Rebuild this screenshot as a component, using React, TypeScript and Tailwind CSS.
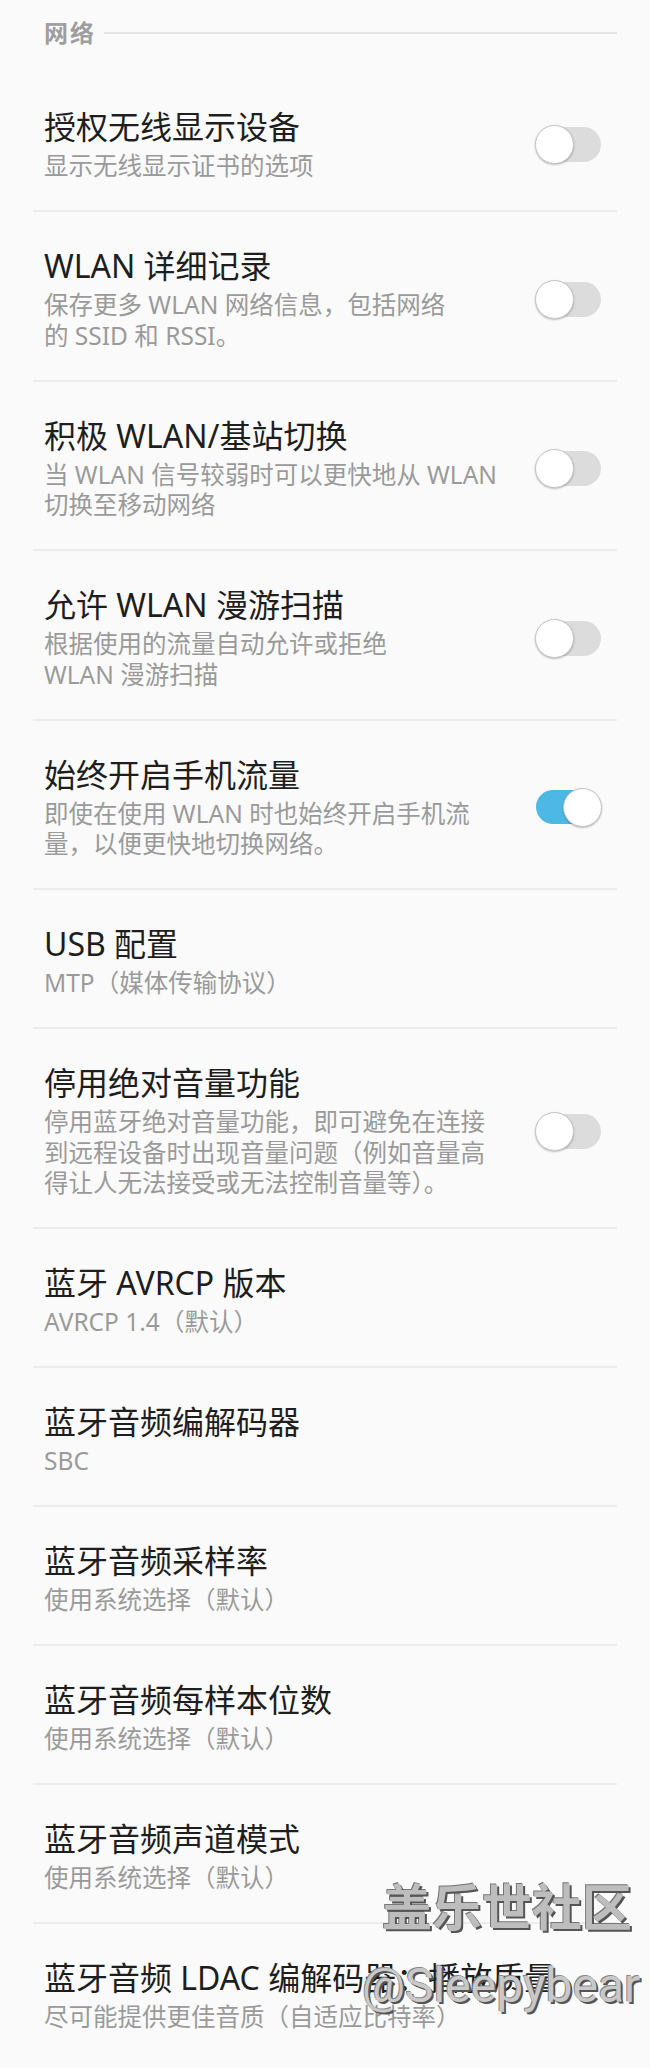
import React from 'react';

interface SettingRow {
  title: string;
  lines: string[];
  toggle?: 'on' | 'off';
}

const rows: SettingRow[] = [
  { title: '授权无线显示设备', lines: ['显示无线显示证书的选项'], toggle: 'off' },
  { title: 'WLAN 详细记录', lines: ['保存更多 WLAN 网络信息，包括网络', '的 SSID 和 RSSI。'], toggle: 'off' },
  { title: '积极 WLAN/基站切换', lines: ['当 WLAN 信号较弱时可以更快地从 WLAN', '切换至移动网络'], toggle: 'off' },
  { title: '允许 WLAN 漫游扫描', lines: ['根据使用的流量自动允许或拒绝', 'WLAN 漫游扫描'], toggle: 'off' },
  { title: '始终开启手机流量', lines: ['即使在使用 WLAN 时也始终开启手机流', '量，以便更快地切换网络。'], toggle: 'on' },
  { title: 'USB 配置', lines: ['MTP（媒体传输协议）'] },
  {
    title: '停用绝对音量功能',
    lines: ['停用蓝牙绝对音量功能，即可避免在连接', '到远程设备时出现音量问题（例如音量高', '得让人无法接受或无法控制音量等）。'],
    toggle: 'off',
  },
  { title: '蓝牙 AVRCP 版本', lines: ['AVRCP 1.4（默认）'] },
  { title: '蓝牙音频编解码器', lines: ['SBC'] },
  { title: '蓝牙音频采样率', lines: ['使用系统选择（默认）'] },
  { title: '蓝牙音频每样本位数', lines: ['使用系统选择（默认）'] },
  { title: '蓝牙音频声道模式', lines: ['使用系统选择（默认）'] },
  { title: '蓝牙音频 LDAC 编解码器：播放质量', lines: ['尽可能提供更佳音质（自适应比特率）'] },
];

const Toggle: React.FC<{ on: boolean }> = ({ on }) => (
  <div className="relative w-[68px] h-[40px] shrink-0">
    <div
      className={
        on
          ? 'absolute left-[2px] top-[3px] w-[62px] h-[34px] rounded-full bg-[#4db8e4]'
          : 'absolute left-[5px] top-[3px] w-[62px] h-[35px] rounded-full bg-[#dcdcdc]'
      }
    />
    <div
      className={
        on
          ? 'absolute right-0 top-[1px] w-[39px] h-[39px] rounded-full bg-white border border-[#c4c4c4] shadow-[0_1px_2px_rgba(0,0,0,0.25)]'
          : 'absolute left-[1px] top-[1px] w-[39px] h-[39px] rounded-full bg-white border border-[#c4c4c4] shadow-[0_1px_2px_rgba(0,0,0,0.25)]'
      }
    />
  </div>
);

const Row: React.FC<{ row: SettingRow; last: boolean }> = ({ row, last }) => (
  <div className={last ? 'mx-[33px]' : 'mx-[33px] border-b-2 border-[#ececec]'}>
    <div className="flex items-center pl-[11px] pr-[15px] pt-[34px] pb-[28.5px]">
      <div className="flex-1 min-w-0">
        <div className="text-[32px] leading-[40px] text-[#1e1e1e] whitespace-nowrap">{row.title}</div>
        <div className="mt-[4px] text-[24.5px] leading-[30.5px] text-[#9a9a9a]">
          {row.lines.map((l, i) => (
            <div key={i} className="whitespace-nowrap">
              {l}
            </div>
          ))}
        </div>
      </div>
      {row.toggle && <Toggle on={row.toggle === 'on'} />}
    </div>
  </div>
);

export default function App() {
  return (
    <div
      className="relative w-[650px] h-[2068px] overflow-hidden bg-[#fafafa]"
      style={{ fontFamily: '"Noto Sans", "Noto Sans CJK SC", sans-serif' }}
    >
      {/* Section header */}
      <div className="flex items-center h-[73px] pl-[44px] pr-[33px] pb-[8px]">
        <span className="text-[24px] leading-[30px] font-semibold text-[#9e9e9e] tracking-[2px]">网络</span>
        <div className="flex-1 ml-[8px] h-[2px] bg-[#e4e4e4]" />
      </div>

      {rows.map((r, i) => (
        <Row key={i} row={r} last={i === rows.length - 1} />
      ))}

      {/* Watermark */}
      <div className="absolute left-[382px] top-[1882px] whitespace-nowrap text-[50px] leading-[50px] font-bold text-[#bdbdbd] [text-shadow:2px_2px_0_#555,-1px_-1px_0_#777]">
        盖乐世社区
      </div>
      <div
        className="absolute left-[362px] top-[1956px] whitespace-nowrap text-[48px] leading-[60px] text-[#c8c8c8] [text-shadow:2px_2px_0_#555,-1px_-1px_0_#888]"
        style={{ fontFamily: 'Roboto, sans-serif' }}
      >
        @Sleepybear
      </div>
    </div>
  );
}
